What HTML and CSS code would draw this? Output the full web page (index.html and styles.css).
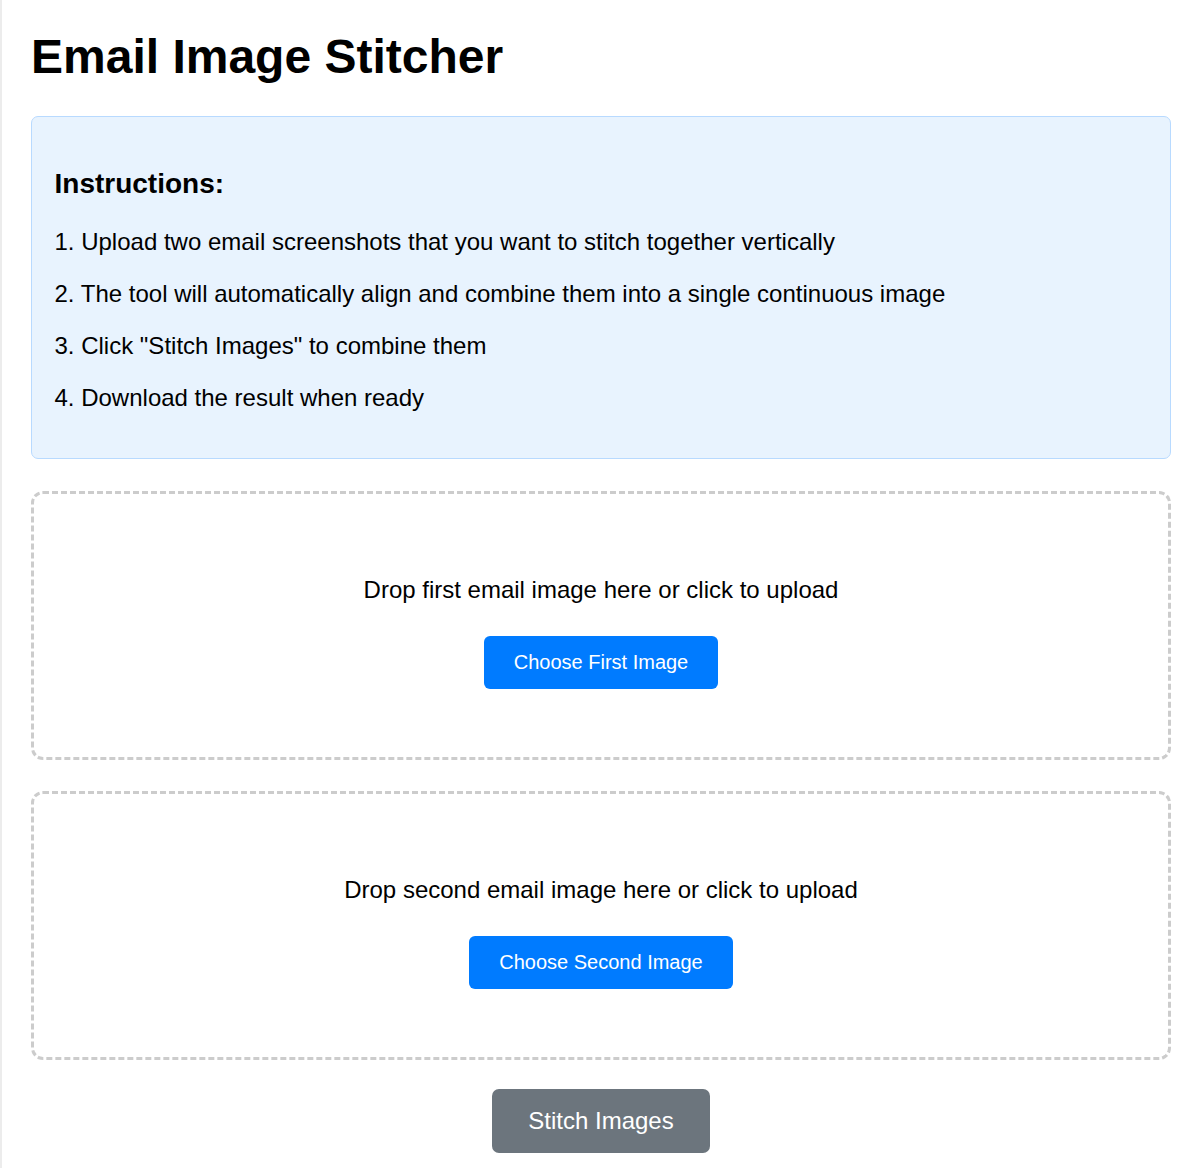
FILE: index.html
```html
<!DOCTYPE html>
<html lang="en">
<head>
<meta charset="utf-8">
<title>Email Image Stitcher</title>
<link rel="stylesheet" href="styles.css">
</head>
<body>
<div class="page">
  <h1 class="title">Email Image Stitcher</h1>
  <div class="instructions">
    <h3 class="instructions-title">Instructions:</h3>
    <p class="step">1. Upload two email screenshots that you want to stitch together vertically</p>
    <p class="step">2. The tool will automatically align and combine them into a single continuous image</p>
    <p class="step">3. Click "Stitch Images" to combine them</p>
    <p class="step">4. Download the result when ready</p>
  </div>
  <div class="drop-zone drop-zone-first">
    <p class="drop-text">Drop first email image here or click to upload</p>
    <button class="btn-primary" type="button">Choose First Image</button>
  </div>
  <div class="drop-zone">
    <p class="drop-text">Drop second email image here or click to upload</p>
    <button class="btn-primary" type="button">Choose Second Image</button>
  </div>
  <div class="actions">
    <button class="btn-secondary" type="button">Stitch Images</button>
  </div>
</div>
</body>
</html>
```

FILE: styles.css
```css
html, body {
  margin: 0;
  padding: 0;
}
body {
  font-family: "Liberation Sans", Arial, sans-serif;
  font-size: 24px;
  color: #000;
  background: #fff;
  border-left: 2px solid #ececec;
  min-height: 100vh;
  box-sizing: border-box;
}
.page {
  margin-left: 29px;
  width: 1140px;
  padding-top: 29px;
}
.title {
  font-size: 48px;
  font-weight: bold;
  margin: 0 0 32px;
  line-height: normal;
}
.instructions {
  background: #e8f3fe;
  border: 1px solid #b8daff;
  border-radius: 7px;
  padding: 22.5px;
}
.instructions-title {
  font-size: 28px;
  font-weight: bold;
  margin: 28px 0;
}
.step {
  margin: 24px 0;
}
.drop-zone {
  margin-top: 31px;
  border: 3px dashed #cccccc;
  border-radius: 12px;
  padding: 58px 20px 68px;
  text-align: center;
}
.drop-zone-first {
  margin-top: 32px;
}
.drop-text {
  margin: 24px 0 32px;
}
.btn-primary {
  font-family: "Liberation Sans", Arial, sans-serif;
  font-size: 20px;
  line-height: 23px;
  color: #fff;
  background: #007bff;
  border: none;
  border-radius: 6px;
  padding: 15px 30px;
  vertical-align: top;
}
.actions {
  margin-top: 29px;
  text-align: center;
}
.btn-secondary {
  font-family: "Liberation Sans", Arial, sans-serif;
  font-size: 24px;
  line-height: 28px;
  color: #fff;
  background: #6c757d;
  border: none;
  border-radius: 7px;
  padding: 18px 36px;
}
```
